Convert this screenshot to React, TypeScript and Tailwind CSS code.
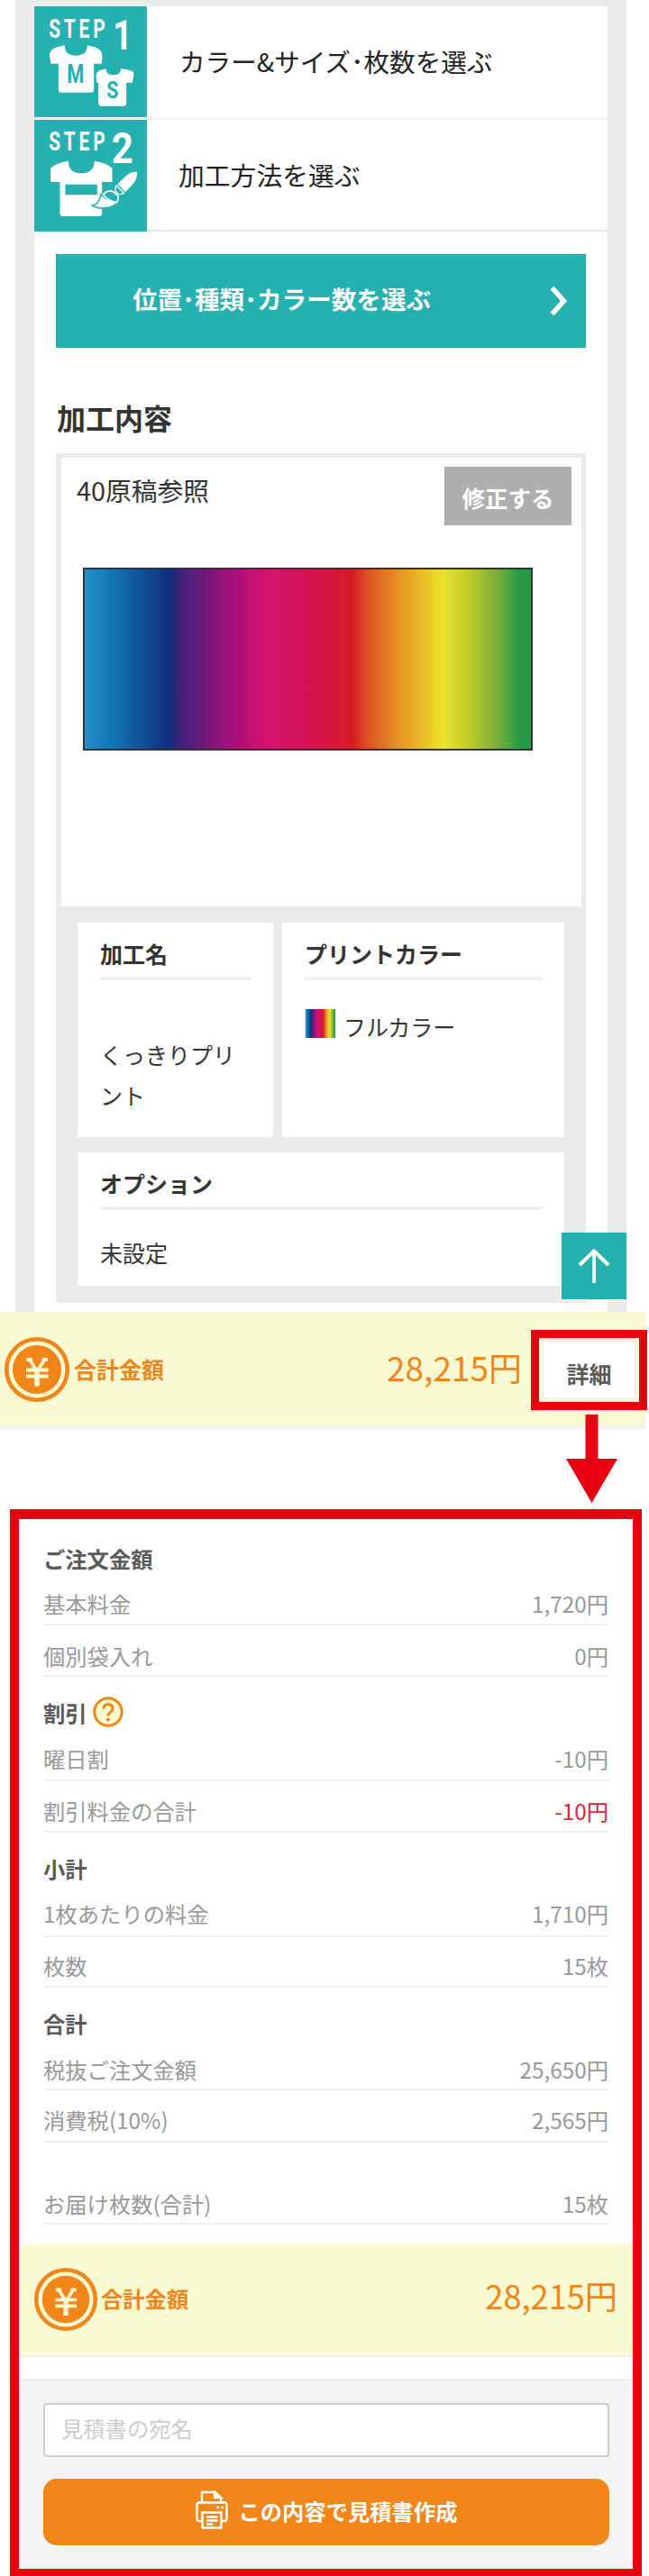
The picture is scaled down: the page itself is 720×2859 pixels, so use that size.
import { ReactNode } from "react";

interface Row {
  label: string;
  value: string;
  space: string;
  red?: boolean;
}

interface Group {
  title?: string;
  space: string;
  help?: boolean;
  rows: Row[];
}

const groups: Group[] = [
  {
    title: "ご注文金額",
    space: "mt-[26px]",
    rows: [
      { label: "基本料金", value: "1,720円", space: "mt-[15px] pb-[5px]" },
      { label: "個別袋入れ", value: "0円", space: "mt-[17px] pb-[4px]" },
    ],
  },
  {
    title: "割引",
    space: "mt-[22px]",
    help: true,
    rows: [
      { label: "曜日割", value: "-10円", space: "mt-[16px] pb-[6px]" },
      { label: "割引料金の合計", value: "-10円", space: "mt-[16px] pb-[5px]", red: true },
    ],
  },
  {
    title: "小計",
    space: "mt-[22px]",
    rows: [
      { label: "1枚あたりの料金", value: "1,710円", space: "mt-[15px] pb-[7px]" },
      { label: "枚数", value: "15枚", space: "mt-[15px] pb-[5px]" },
    ],
  },
  {
    title: "合計",
    space: "mt-[22px]",
    rows: [
      { label: "税抜ご注文金額", value: "25,650円", space: "mt-[16px] pb-[4px]" },
      { label: "消費税(10%)", value: "2,565円", space: "mt-[16px] pb-[6px]" },
    ],
  },
  {
    space: "",
    rows: [{ label: "お届け枚数(合計)", value: "15枚", space: "mt-[51px] pb-[4px]" }],
  },
];

const rainbow =
  "bg-[linear-gradient(90deg,#2094cc_0%,#1173b2_7%,#10307f_19%,#43217a_22%,#a50f79_33%,#d41371_41%,#d5134e_51%,#d71b24_60%,#dc4e21_63%,#e79225_70%,#ebe22c_80%,#bfcb29_86%,#74ae3c_92.5%,#279a47_97%,#279a47_100%)]";

function StepOneIcon() {
  return (
    <svg viewBox="24 21 374 369" className="h-[123px] w-[125px] shrink-0 bg-[#25b1af]" fontFamily="Roboto, sans-serif" fontWeight="700" fill="#fff">
      <text transform="translate(72 127) scale(.72 1)" fontSize="87" letterSpacing="16">STEP</text>
      <text transform="translate(285 165) scale(.8 1)" fontSize="140">1</text>
      <path d="M125 151L98 157Q76 164 74 184L79 212H104V299Q104 308 114 308H212Q222 308 222 299V212H248L250 184Q247 164 226 157L200 151Q200 185 162 185Q124 185 125 151Z" />
      <path d="M262 229L242 234Q231 239 229 252L231 275H237V344Q237 353 246 353H321Q330 353 330 344V275H350L355 245Q352 235 334 232L312 229Q312 250 287 250Q262 250 262 229Z" />
      <text transform="translate(132 276) scale(.76 1)" fontSize="86" fill="#25b1af">M</text>
      <text transform="translate(264 328) scale(.8 1)" fontSize="80" fill="#25b1af">S</text>
    </svg>
  );
}

function StepTwoIcon() {
  return (
    <svg viewBox="24 399 374 372" className="h-[124px] w-[125px] shrink-0 bg-[#25b1af]" fontFamily="Roboto, sans-serif" fontWeight="700" fill="#fff">
      <text transform="translate(72 501) scale(.72 1)" fontSize="87" letterSpacing="16">STEP</text>
      <text transform="translate(281 542) scale(.86 1)" fontSize="147">2</text>
      <path d="M137 536Q100 540 78 560V606H109V710Q109 720 122 720H238Q249 720 249 710V606H283V560Q264 542 224 536Q222 577 180 577Q138 577 137 536Z" />
      <path d="M127 614H233V649H127Z" fill="#25b1af" />
      {/* 筆 */}
      <path d="M366 572Q345 570 323 591L301 613L326 640L350 615Q368 594 366 572Z" />
      <path d="M297 618L322 643Q310 650 303 645L293 636Q291 626 297 618Z" fill="none" stroke="#fff" strokeWidth="4" />
      <path d="M247 652Q260 668 298 674Q283 689 257 690Q237 693 223 685Q240 680 247 652Z" stroke="#25b1af" strokeWidth="10" />
      <path d="M253 648Q268 632 284 637L302 651Q305 668 297 674Q270 670 253 648Z" fill="#25b1af" stroke="#fff" strokeWidth="5" />
      <path d="M247 652Q260 668 298 674Q283 689 257 690Q237 693 223 685Q240 680 247 652Z" />
    </svg>
  );
}

function YenIcon({ className }: { className: string }) {
  return (
    <svg viewBox="0 0 72 72" className={className}>
      <circle cx="36" cy="36" r="33.7" fill="none" stroke="#f08519" strokeWidth="4.6" />
      <circle cx="36" cy="36" r="27" fill="#f08519" />
      <path d="M28 25L36 38L44.5 25M24.5 25H31M41.5 25H48M24 36.5H48.5M24 43.5H48.5" fill="none" stroke="#f9f9d2" strokeWidth="3.8" />
      <path d="M36 36V54.5" stroke="#f9f9d2" strokeWidth="5.5" />
    </svg>
  );
}

function HelpIcon() {
  return (
    <svg viewBox="0 0 34 34" className="-mt-[2px] ml-[6px] h-[34px] w-[34px]">
      <circle cx="17" cy="17" r="15.2" fill="#f9f9d2" stroke="#f08519" strokeWidth="3" />
      <path d="M12 13.5Q12 8.5 17 8.5Q22 8.5 22 13Q22 15.5 19.5 17.2Q17 19 17 21.5" fill="none" stroke="#f08519" strokeWidth="3" />
      <circle cx="17" cy="25.5" r="1.9" fill="#f08519" />
    </svg>
  );
}

function PrinterIcon() {
  return (
    <svg viewBox="0 0 36 43" className="-mt-[2px] h-[43px] w-[36px]" fill="none" stroke="#fff" strokeWidth="2.4">
      <path d="M7 13V2H22L28 8V13" />
      <path d="M21 2V8H28Z" fill="#fff" />
      <path d="M7 34H4Q1.5 34 1.5 31V16Q1.5 13.5 4 13.5H32Q34.5 13.5 34.5 16V31Q34.5 34 32 34H29" />
      <path d="M7.5 24.5H28.5V41.5H7.5Z" />
      <path d="M12 29.5H24.5M12 33.5H24.5M12 37.5H19M23.5 19H26M28.5 19H31" />
    </svg>
  );
}

function Spec({ title, className, children }: { title: string; className: string; children: ReactNode }) {
  return (
    <div className={"bg-white pr-[24px] pl-[24px] text-[25px] " + className}>
      <div className="h-[64px] border-b-4 border-[#f0f0ef] pt-[16px] pl-px leading-[36px] font-bold">{title}</div>
      {children}
    </div>
  );
}

export default function App() {
  return (
    <main className="h-[2859px] w-[720px] overflow-hidden bg-white font-['Noto_Sans_CJK_JP','Noto_Sans',sans-serif] text-[#333]">
      {/* 注文ステップ */}
      <section className="relative ml-[17px] h-[1456px] w-[678px] border-x-[21px] border-t-[7px] border-[#ebebe9]">
        <div className="flex h-[126px] items-center border-b-[3px] border-[#f4f4f4] text-[28.6px] text-[#222]">
          <StepOneIcon />
          <span className="ml-[36px]">カラー&サイズ･枚数を選ぶ</span>
        </div>
        <div className="flex h-[124px] items-center text-[28.8px] text-[#222]">
          <StepTwoIcon />
          <span className="flex h-full flex-1 items-center border-b-2 border-[#e6e6e6] pl-[35px]">加工方法を選ぶ</span>
        </div>

        <div className="px-[24px]">
          <button className="mt-[25px] flex h-[104px] w-[588px] items-center justify-between bg-[#25b1af] pr-[20px] pl-[85px] text-[27.6px] font-bold text-white">
            <span className="relative -top-[2px]">位置･種類･カラー数を選ぶ</span>
            <svg viewBox="0 0 20 32" className="h-[32px] w-[20px]">
              <path d="M2.5 1.5L15.5 16L2.5 30.5" fill="none" stroke="#fff" strokeWidth="5.5" />
            </svg>
          </button>

          <h2 className="mt-[54px] pl-px text-[32px] leading-[46px] font-bold">加工内容</h2>

          <div className="mt-[17px] h-[943px] w-[588px] bg-[#ebebe9] px-[6px] pt-[5px]">
            <div className="h-[498px] w-[577px] bg-white">
              <div className="flex justify-between pt-[10px] pr-[11px] pl-[17px]">
                <span className="mt-[5px] text-[28.8px] leading-[42px]">40原稿参照</span>
                <button className="h-[65px] w-[141px] bg-[#aeaeae] pt-[3px] text-[25.5px] font-bold text-white">修正する</button>
              </div>
              <div className={"mt-[47px] ml-[24px] h-[203px] w-[499px] border-[2.5px] border-[#333] bg-origin-border " + rainbow}></div>
            </div>

            <div className="mt-[18px] flex gap-[10px] pl-[18px]">
              <Spec title="加工名" className="h-[238px] w-[217px]">
                <p className="mt-[60px] pl-px leading-[45px]">くっきりプリント</p>
              </Spec>
              <Spec title="プリントカラー" className="h-[238px] w-[313px]">
                <div className="mt-[30px] flex items-start">
                  <div className="h-[36px] w-[37px] border-2 border-[#f4f4f4]">
                    <div className={"h-full w-full " + rainbow}></div>
                  </div>
                  <span className="mt-[3px] ml-[7px] leading-[36px]">フルカラー</span>
                </div>
              </Spec>
            </div>
            <div className="mt-[17px] pl-[18px]">
              <Spec title="オプション" className="h-[148px] w-[540px]">
                <p className="mt-[29px] pl-px leading-[36px]">未設定</p>
              </Spec>
            </div>
          </div>
        </div>

        {/* ページ上部へ */}
        <button className="absolute top-[1361px] -right-[21px] flex h-[74px] w-[72px] items-center justify-center bg-[#25b1af]">
          <svg viewBox="0 0 36 38" className="h-[38px] w-[36px]">
            <path d="M2 18L18 2.5L34 18M18 2.5V38" fill="none" stroke="#fff" strokeWidth="4" />
          </svg>
        </button>
      </section>

      <section className="flex h-[131px] w-[716px] border-b-[5px] border-[#f3f1f2] bg-[#f9f9d2] text-[#f08519]">
        <YenIcon className="mt-[28px] ml-[5px] h-[72px] w-[72px]" />
        <span className="mt-[45px] ml-[5px] text-[25px] leading-[36px] font-bold">合計金額</span>
        <span className="mt-[35px] ml-auto pr-[10px] text-[37px] leading-[52px]">28,215円</span>
        <div className="mt-[20px] -mr-[2px] h-[89px] w-[129px] border-[9.5px] border-[#e60012] p-[3px]">
          <button className="h-full w-full border-2 border-[#f0f0f5] bg-white pt-[6px] text-[25px] leading-[36px] font-bold text-[#5a5a5a]">詳細</button>
        </div>
      </section>

      <svg viewBox="0 0 57 98" className="-mt-[17px] ml-[628px] h-[98px] w-[57px]">
        <path d="M21.5 0H35.5V49H57L28.5 98L0 49H21.5Z" fill="#e60012" />
      </svg>

      {/* 見積もり明細 */}
      <section className="mt-[7px] ml-[11px] h-[1184px] w-[701px] border-x-[10px] border-t-[11px] border-b-[9px] border-[#e60012] text-[24.3px] leading-[34px]">
        <div className="flow-root px-[27px]">
          {groups.map((group, i) => (
            <div key={i} className="flow-root">
              {group.title && (
                <h3 className={"flex h-[36px] items-center font-bold text-[#5a5a5a] " + group.space}>
                  {group.title}
                  {group.help && <HelpIcon />}
                </h3>
              )}
              {group.rows.map((row) => (
                <div key={row.label} className={"flex justify-between border-b-2 border-[#eee] text-[#999] " + row.space}>
                  <span>{row.label}</span>
                  <span className={row.red ? "text-[#e8222c]" : ""}>{row.value}</span>
                </div>
              ))}
            </div>
          ))}
        </div>

        <div className="mt-[22px] ml-[2px] flex h-[125px] border-b-2 border-[#eee] bg-[#f9f9d2] text-[#f08519]">
          <YenIcon className="mt-[26px] ml-[15px] h-[70px] w-[70px]" />
          <span className="mt-[43px] ml-[4px] font-bold">合計金額</span>
          <span className="mt-[30px] ml-auto pr-[17px] text-[36.2px] leading-[52px]">28,215円</span>
        </div>

        <div className="mt-[24px] h-[211px] border-t-2 border-[#eee] bg-[#f4f4f4] px-[27px] pt-[25px]">
          <input
            type="text"
            placeholder="見積書の宛名"
            className="block h-[60px] w-[628px] rounded-[4px] border-2 border-[#ccc] bg-white px-[18px] pb-[5px] placeholder:text-[#ccc]"
          />
          <button className="mt-[24px] flex h-[74px] w-[628px] items-center justify-center rounded-[15px] bg-[#f18719] pb-[3px] font-bold text-white">
            <PrinterIcon />
            <span className="ml-[12px]">この内容で見積書作成</span>
          </button>
        </div>
      </section>
    </main>
  );
}
